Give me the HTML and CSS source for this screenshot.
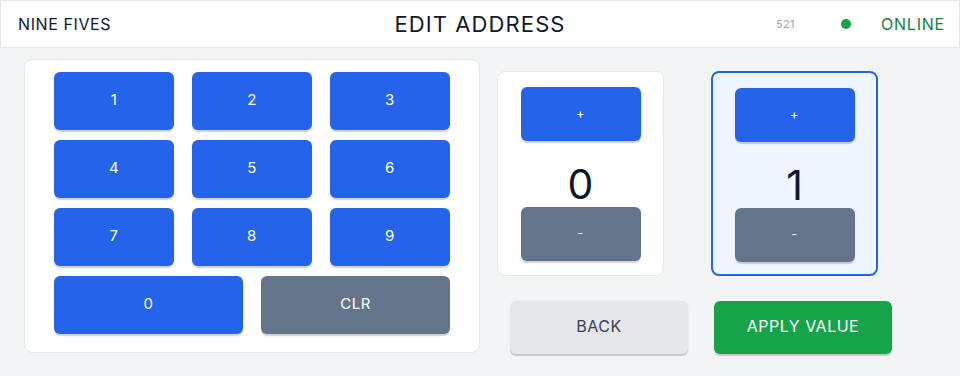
FILE: index.html
```html
<!DOCTYPE html>
<html>
<head>
<meta charset="utf-8">
<link rel="stylesheet" href="styles.css">
</head>
<body>
<header class="topbar">
  <div class="brand">NINE FIVES</div>
  <div class="title">EDIT ADDRESS</div>
  <div class="status">
    <span class="code">521</span>
    <span class="dot"></span>
    <span class="online">ONLINE</span>
  </div>
</header>
<main class="main">
  <section class="keypad">
    <div class="keys">
      <button class="btn blue">1</button>
      <button class="btn blue">2</button>
      <button class="btn blue">3</button>
      <button class="btn blue">4</button>
      <button class="btn blue">5</button>
      <button class="btn blue">6</button>
      <button class="btn blue">7</button>
      <button class="btn blue">8</button>
      <button class="btn blue">9</button>
    </div>
    <div class="keys-last">
      <button class="btn blue">0</button>
      <button class="btn slate">CLR</button>
    </div>
  </section>
  <section class="side">
    <div class="counters">
      <div class="counter">
        <button class="btn blue small">+</button>
        <div class="value">0</div>
        <button class="btn slate small">-</button>
      </div>
      <div class="counter active">
        <button class="btn blue small">+</button>
        <div class="value">1</div>
        <button class="btn slate small">-</button>
      </div>
    </div>
    <div class="actions">
      <button class="btn gray action">BACK</button>
      <button class="btn green action">APPLY VALUE</button>
    </div>
  </section>
</main>
</body>
</html>
```
FILE: styles.css
```css
* { box-sizing: border-box; }
html, body { margin: 0; padding: 0; }
body {
  background: #f3f4f6;
  font-family: "Inter", "Noto Sans", sans-serif;
  color: #111827;
  width: 960px;
  height: 376px;
  overflow: hidden;
}
.topbar {
  height: 48px;
  background: #fff;
  border: 1px solid #e5e7eb;
  display: flex;
  align-items: center;
  position: relative;
  padding: 0 14px 0 17px;
}
.brand {
  font-size: 16px;
  color: #111827;
  letter-spacing: 0.6px;
}
.title {
  position: absolute;
  left: 0; right: 0;
  text-align: center;
  font-size: 22px;
  letter-spacing: 1.1px;
  color: #111827;
  pointer-events: none;
}
.status {
  margin-left: auto;
  display: flex;
  align-items: center;
}
.code {
  font-size: 11px;
  color: #9ca3af;
  letter-spacing: 0.3px;
}
.dot {
  width: 10px; height: 10px;
  border-radius: 50%;
  background: #16a34a;
  margin-left: 46px;
  margin-right: 2px;
}
.online {
  margin-left: 28px;
  font-size: 16px;
  color: #15803d;
  letter-spacing: 0.8px;
}
.main {
  display: flex;
  padding: 11px 0 0 24px;
}
.keypad {
  width: 456px;
  height: 294px;
  background: #fff;
  border: 1px solid #e5e7eb;
  border-radius: 9px;
  padding: 12px 29px 0 29px;
}
.keys {
  display: grid;
  grid-template-columns: repeat(3, 120px);
  column-gap: 18px;
  row-gap: 10px;
}
.keys-last {
  display: grid;
  grid-template-columns: 189px 189px;
  column-gap: 18px;
  margin-top: 10px;
}
.btn {
  border: none;
  border-radius: 6px;
  font-family: inherit;
  color: #fff;
  font-size: 15px;
  letter-spacing: 0.5px;
  height: 58px;
  padding: 0 0 3px 0;
  box-shadow: 0 2px 1px rgba(0,0,0,0.18);
}
.blue { background: #2563eb; }
.slate { background: #64748b; }
.gray { background: #e5e7eb; color: #374151; }
.green { background: #16a34a; }
.side {
  margin-left: 17px;
  padding-top: 12px;
}
.counters {
  display: flex;
  gap: 47px;
}
.counter {
  width: 167px;
  height: 205px;
  background: #fff;
  border: 1px solid #e5e7eb;
  border-radius: 8px;
  padding: 15px 0 0 0;
  display: flex;
  flex-direction: column;
  align-items: center;
}
.counter.active {
  background: #eff6ff;
  border: 2px solid #2563eb;
  padding-top: 15px;
}
.btn.small {
  width: 120px;
  height: 54px;
  font-size: 13px;
}
.value {
  height: 66px;
  display: flex;
  align-items: flex-end;
  font-size: 41px;
  line-height: 1;
  padding-bottom: 2px;
  color: #111827;
}
.actions {
  display: flex;
  gap: 26px;
  padding-left: 13px;
  margin-top: 25px;
}
.btn.action {
  width: 178px;
  height: 53px;
  font-size: 16px;
}
```
